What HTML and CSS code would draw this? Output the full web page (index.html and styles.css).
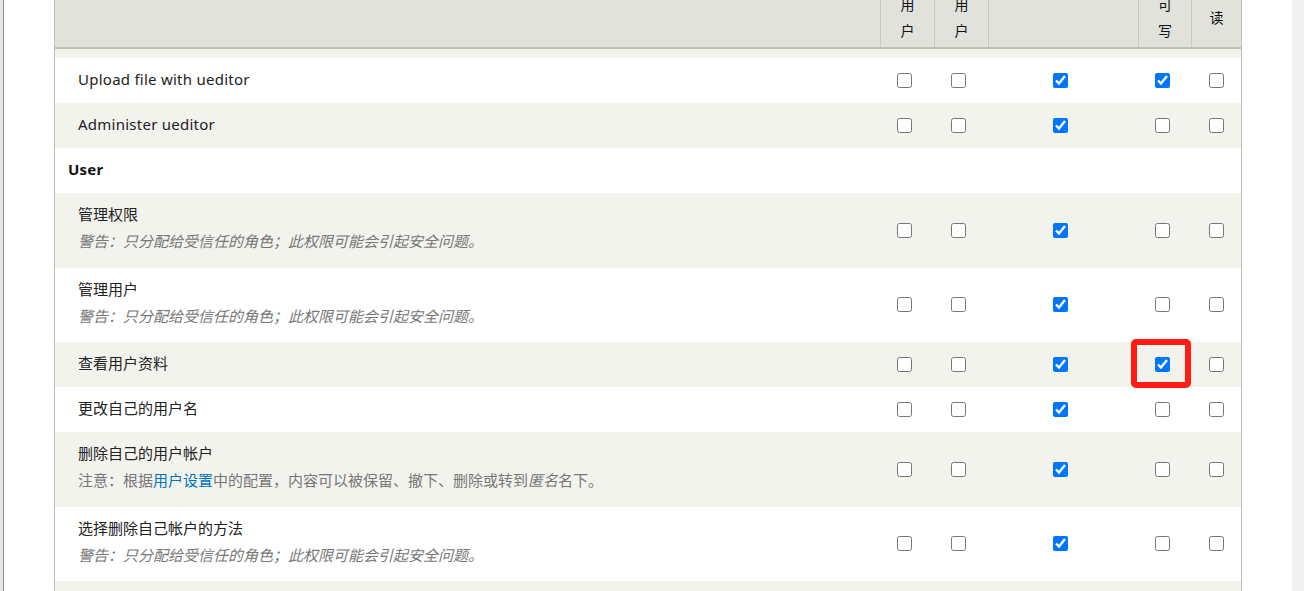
FILE: index.html
```html
<!DOCTYPE html>
<html lang="zh-CN">
<head>
  <meta charset="UTF-8">
  <title>权限</title>
  <link rel="stylesheet" href="styles.css">
</head>
<body>

  <div class="edge"></div>

  <div class="page">
    <div class="perm-table">

      <div class="row head">
        <div class="cell"></div>
        <div class="cell"><span>用<br>户</span></div>
        <div class="cell"><span>用<br>户</span></div>
        <div class="cell"></div>
        <div class="cell"><span>可<br>写</span></div>
        <div class="cell"><span>读</span></div>
      </div>

      <div class="rows">
        <div class="row tail"></div>

        <div class="row">
          <div class="name latin">Upload file with ueditor</div>
          <div class="box"><input type="checkbox"></div>
          <div class="box"><input type="checkbox"></div>
          <div class="box"><input type="checkbox" checked></div>
          <div class="box"><input type="checkbox" checked></div>
          <div class="box"><input type="checkbox"></div>
        </div>

        <div class="row">
          <div class="name latin">Administer ueditor</div>
          <div class="box"><input type="checkbox"></div>
          <div class="box"><input type="checkbox"></div>
          <div class="box"><input type="checkbox" checked></div>
          <div class="box"><input type="checkbox"></div>
          <div class="box"><input type="checkbox"></div>
        </div>

        <div class="row group">
          <div class="module latin">User</div>
        </div>

        <div class="row">
          <div class="name">
            管理权限
            <div class="desc warn">警告：只分配给受信任的角色；此权限可能会引起安全问题。</div>
          </div>
          <div class="box"><input type="checkbox"></div>
          <div class="box"><input type="checkbox"></div>
          <div class="box"><input type="checkbox" checked></div>
          <div class="box"><input type="checkbox"></div>
          <div class="box"><input type="checkbox"></div>
        </div>

        <div class="row">
          <div class="name">
            管理用户
            <div class="desc warn">警告：只分配给受信任的角色；此权限可能会引起安全问题。</div>
          </div>
          <div class="box"><input type="checkbox"></div>
          <div class="box"><input type="checkbox"></div>
          <div class="box"><input type="checkbox" checked></div>
          <div class="box"><input type="checkbox"></div>
          <div class="box"><input type="checkbox"></div>
        </div>

        <div class="row">
          <div class="name">查看用户资料</div>
          <div class="box"><input type="checkbox"></div>
          <div class="box"><input type="checkbox"></div>
          <div class="box"><input type="checkbox" checked></div>
          <div class="box"><span class="marked"><input type="checkbox" checked></span></div>
          <div class="box"><input type="checkbox"></div>
        </div>

        <div class="row">
          <div class="name">更改自己的用户名</div>
          <div class="box"><input type="checkbox"></div>
          <div class="box"><input type="checkbox"></div>
          <div class="box"><input type="checkbox" checked></div>
          <div class="box"><input type="checkbox"></div>
          <div class="box"><input type="checkbox"></div>
        </div>

        <div class="row">
          <div class="name">
            删除自己的用户帐户
            <div class="desc">注意：根据<a href="#">用户设置</a>中的配置，内容可以被保留、撤下、删除或转到<em>匿名</em>名下。</div>
          </div>
          <div class="box"><input type="checkbox"></div>
          <div class="box"><input type="checkbox"></div>
          <div class="box"><input type="checkbox" checked></div>
          <div class="box"><input type="checkbox"></div>
          <div class="box"><input type="checkbox"></div>
        </div>

        <div class="row">
          <div class="name">
            选择删除自己帐户的方法
            <div class="desc warn">警告：只分配给受信任的角色；此权限可能会引起安全问题。</div>
          </div>
          <div class="box"><input type="checkbox"></div>
          <div class="box"><input type="checkbox"></div>
          <div class="box"><input type="checkbox" checked></div>
          <div class="box"><input type="checkbox"></div>
          <div class="box"><input type="checkbox"></div>
        </div>

        <div class="row">
          <div class="name"></div>
        </div>
      </div>

    </div>
  </div>

  <div class="scrollbar"></div>

</body>
</html>
```

FILE: styles.css
```css
body {
  font-family: "Noto Sans", "Noto Sans CJK SC", sans-serif;
  font-size: 15px;
  color: #222;
  background: #fff;
  margin: 0;
  padding: 0;
  display: flex;
  height: 591px;
  overflow: hidden;
}
.edge {
  width: 3px;
  flex-shrink: 0;
  background: #e6e6e6;
  border-right: 1px solid #8c8c8c;
}
.page {
  flex: 1;
  padding: 0 50px;
  background: #fff;
}
.scrollbar {
  width: 12px;
  flex-shrink: 0;
  background: #f0f0f0;
}
.perm-table {
  border-left: 1px solid #bfbfba;
  border-right: 1px solid #bfbfba;
  height: 100%;
}
.row {
  display: grid;
  grid-template-columns: 1fr 54px 54px 150px 53px 50px;
}
.head {
  grid-template-rows: 47px;
  background: #e1e2dc;
  border-bottom: 2px solid #bfbfba;
}
.head .cell {
  height: 47px;
  box-sizing: border-box;
  overflow: hidden;
  display: flex;
  align-items: center;
  justify-content: center;
  text-align: center;
  padding-bottom: 11px;
  line-height: 26px;
  font-size: 14px;
  color: #111;
}
.head .cell span {
  flex-shrink: 0;
}
.head .cell + .cell {
  border-left: 1px solid #c9c9c3;
}
.rows .row:nth-child(odd) {
  background: #f3f3ee;
}
.rows .row.tail {
  height: 9px;
}
.name {
  padding: 10px 0 13px 23px;
  line-height: 22px;
  min-height: 22px;
}
.latin {
  letter-spacing: 0.25px;
}
.desc {
  margin-top: 5px;
  margin-bottom: 2.5px;
  color: #777;
  letter-spacing: 0;
}
.desc.warn {
  font-style: italic;
}
.desc a {
  color: #0074bd;
  text-decoration: none;
}
.module {
  padding: 10px 0 13px 13px;
  line-height: 22px;
  font-weight: bold;
  color: #111;
}
.box {
  display: flex;
  align-items: center;
  justify-content: center;
  padding-right: 5px;
}
.box:last-child {
  padding-right: 0;
}
.box input {
  width: 15px;
  height: 15px;
  margin: 0;
}
.marked {
  position: relative;
  display: flex;
}
.marked::after {
  content: "";
  position: absolute;
  top: -18px;
  left: -24px;
  right: -21px;
  bottom: -16px;
  border: 6px solid #ff1c12;
  border-radius: 5px;
}
```
